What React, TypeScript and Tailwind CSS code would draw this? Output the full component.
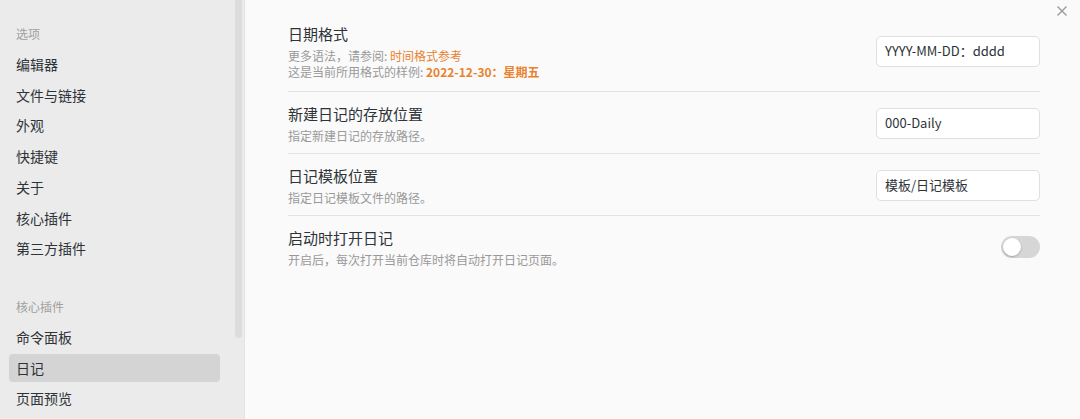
import React from "react";

const font = { fontFamily: '"Noto Sans CJK SC", "Liberation Sans", sans-serif' };

const navOptions = ["编辑器", "文件与链接", "外观", "快捷键", "关于", "核心插件", "第三方插件"];
const navPlugins = ["命令面板", "日记", "页面预览"];

const Input = ({ value }: { value: string }) => (
    <div className="flex h-[31px] w-[164px] items-center rounded-[5px] border border-[#e0e0e0] bg-white px-[8px] text-[13px] text-[#2e3338]">
        {value}
    </div>
);

export default function App() {
    return (
        <div style={font} className="flex h-[419px] w-[1080px] overflow-hidden bg-[#fafafa]">
            <aside className="relative flex w-[245px] shrink-0 flex-col border-r border-[#e3e3e3] bg-[#ebebeb] pl-[9px] pr-[24px] pt-[22px]">
                <div className="px-[7px] text-[12px] leading-[24px] text-[#a0a0a0]">选项</div>
                <div className="mt-[3px] flex flex-col">
                    {navOptions.map((n) => (
                        <div key={n} className="px-[7px] text-[14px] leading-[30.7px] text-[#2e3338]">{n}</div>
                    ))}
                </div>
                <div className="mt-[31px] px-[7px] text-[12px] leading-[24px] text-[#a0a0a0]">核心插件</div>
                <div className="mt-[3px] flex flex-col">
                    {navPlugins.map((n) => (
                        <div
                            key={n}
                            className={
                                n === "日记"
                                    ? "my-[1px] rounded-[4px] bg-[#d4d4d4] px-[7px] text-[14px] leading-[28px] text-[#2e3338]"
                                    : "px-[7px] text-[14px] leading-[31px] text-[#2e3338]"
                            }>
                            {n}
                        </div>
                    ))}
                </div>
                <div className="absolute right-[2px] top-0 h-[338px] w-[7px] rounded-b-[4px] bg-[#dcdcdc]" />
            </aside>

            <main className="relative flex-1 pl-[43px] pr-[40px] pt-[22px]">
                <button className="absolute right-[10px] top-[3px] text-[#9a9a9a]">
                    <svg width="16" height="16" viewBox="0 0 16 16" fill="none" stroke="currentColor" strokeWidth="1.4">
                        <path d="M3.5 3.5l9 9M12.5 3.5l-9 9" />
                    </svg>
                </button>

                <div className="flex items-center justify-between border-b border-[#e3e3e3] pb-[11px]">
                    <div>
                        <div className="text-[15px] leading-[24px] text-[#2e3338]">日期格式</div>
                        <div className="mt-[2px] text-[12px] leading-[16px] text-[#999]">
                            更多语法，请参阅: <span className="text-[#e8822e]">时间格式参考</span>
                        </div>
                        <div className="text-[12px] leading-[16px] text-[#999]">
                            这是当前所用格式的样例: <span className="font-bold text-[#e8822e]">2022-12-30：星期五</span>
                        </div>
                    </div>
                    <Input value="YYYY-MM-DD：dddd" />
                </div>

                <div className="flex items-center justify-between border-b border-[#e3e3e3] pb-[9px] pt-[10px]">
                    <div>
                        <div className="text-[15px] leading-[24px] text-[#2e3338]">新建日记的存放位置</div>
                        <div className="mt-[2px] text-[12px] leading-[16px] text-[#999]">指定新建日记的存放路径。</div>
                    </div>
                    <Input value="000-Daily" />
                </div>

                <div className="flex items-center justify-between border-b border-[#e3e3e3] pb-[9px] pt-[10px]">
                    <div>
                        <div className="text-[15px] leading-[24px] text-[#2e3338]">日记模板位置</div>
                        <div className="mt-[2px] text-[12px] leading-[16px] text-[#999]">指定日记模板文件的路径。</div>
                    </div>
                    <Input value="模板/日记模板" />
                </div>

                <div className="flex items-center justify-between pb-[9px] pt-[10px]">
                    <div>
                        <div className="text-[15px] leading-[24px] text-[#2e3338]">启动时打开日记</div>
                        <div className="mt-[2px] text-[12px] leading-[16px] text-[#999]">开启后，每次打开当前仓库时将自动打开日记页面。</div>
                    </div>
                    <div className="flex h-[22px] w-[39px] items-center rounded-full bg-[#d6d6d6] px-[2px]">
                        <div className="h-[18px] w-[18px] rounded-full bg-white shadow-[0_1px_2px_rgba(0,0,0,0.25)]" />
                    </div>
                </div>
            </main>
        </div>
    );
}
